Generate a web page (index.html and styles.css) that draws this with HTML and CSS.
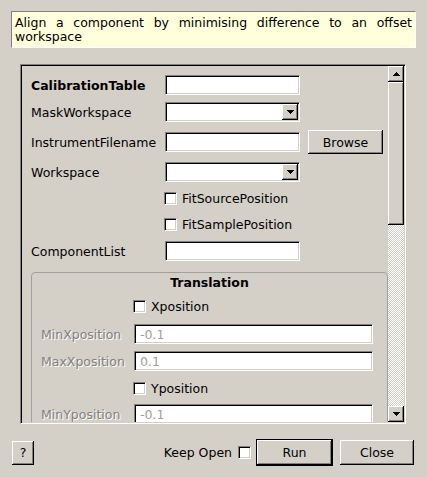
FILE: index.html
```html
<!DOCTYPE html>
<html>
<head>
<meta charset="utf-8">
<link rel="stylesheet" href="styles.css">
</head>
<body>
<div class="dialog">
  <div class="desc">Align a component by minimising difference to an offset workspace</div>
  <div class="scrollframe">
    <div class="viewport">
      <div class="form">
        <div class="row r1"><span class="label bold">CalibrationTable</span><span class="field"></span></div>
        <div class="row r2"><span class="label">MaskWorkspace</span><span class="field combo"><span class="dropbtn"><svg width="7" height="4" viewBox="0 0 7 4"><path d="M0 0h7v1h-1v1h-1v1h-1v1h-1v-1h-1v-1h-1v-1h-1z"/></svg></span></span></div>
        <div class="row r3"><span class="label">InstrumentFilename</span><span class="field"></span><span class="btn browse">Browse</span></div>
        <div class="row r4"><span class="label">Workspace</span><span class="field combo"><span class="dropbtn"><svg width="7" height="4" viewBox="0 0 7 4"><path d="M0 0h7v1h-1v1h-1v1h-1v1h-1v-1h-1v-1h-1v-1h-1z"/></svg></span></span></div>
        <div class="row r5 chkrow"><span class="check"></span><span class="chklabel">FitSourcePosition</span></div>
        <div class="row r6 chkrow"><span class="check"></span><span class="chklabel">FitSamplePosition</span></div>
        <div class="row r7"><span class="label">ComponentList</span><span class="field"></span></div>
        <div class="group">
          <div class="gtitle">Translation</div>
          <div class="grow g1 gchk"><span class="check"></span><span class="chklabel">Xposition</span></div>
          <div class="grow g2"><span class="glabel">MinXposition</span><span class="gfield">-0.1</span></div>
          <div class="grow g3"><span class="glabel">MaxXposition</span><span class="gfield">0.1</span></div>
          <div class="grow g4 gchk"><span class="check"></span><span class="chklabel">Yposition</span></div>
          <div class="grow g5"><span class="glabel">MinYposition</span><span class="gfield">-0.1</span></div>
        </div>
      </div>
    </div>
    <div class="vscroll">
      <div class="sbtn"><svg width="7" height="4" viewBox="0 0 7 4"><path d="M0 4h7v-1h-1v-1h-1v-1h-1v-1h-1v1h-1v1h-1v1h-1z"/></svg></div>
      <div class="thumb"></div>
      <div class="track"></div>
      <div class="sbtn"><svg width="7" height="4" viewBox="0 0 7 4"><path d="M0 0h7v1h-1v1h-1v1h-1v1h-1v-1h-1v-1h-1v-1h-1z"/></svg></div>
    </div>
  </div>
  <div class="footer">
    <span class="btn help">?</span>
    <span class="keep">Keep Open</span>
    <span class="check keepchk"></span>
    <span class="default"><span class="btn run">Run</span></span>
    <span class="btn close">Close</span>
  </div>
</div>
</body>
</html>
```
FILE: styles.css
```css
* { box-sizing: border-box; }
html, body { margin: 0; padding: 0; }
body {
  width: 427px;
  height: 477px;
  overflow: hidden;
  background: #d4d0c8;
  font-family: "DejaVu Sans", sans-serif;
  font-size: 12.5px;
  color: #000;
}
.dialog { padding: 11px 11px 0 11px; }
.desc {
  height: 37px;
  background: #ffffdc;
  border: 1px solid;
  border-color: #808080 #ffffff #ffffff #808080;
  padding: 4px 3px 2px 3px;
  line-height: 14px;
  text-align: justify;
}
.scrollframe {
  margin: 16px 0 0 9px;
  width: 386px;
  height: 360px;
  display: flex;
  border: 1px solid;
  border-color: #808080 #ffffff #ffffff #808080;
  padding: 1px;
  box-shadow: inset 1px 1px #000, inset -1px -1px #d4d0c8;
}
.viewport {
  width: 366px;
  height: 356px;
  overflow: hidden;
}
.vscroll {
  width: 16px;
  height: 356px;
  display: flex;
  flex-direction: column;
}
.sbtn, .thumb, .btn, .dropbtn {
  background: #d4d0c8;
  box-shadow: inset -1px -1px #000, inset 1px 1px #fff, inset -2px -2px #808080;
}
.sbtn {
  height: 16px;
  flex: none;
  display: flex;
  align-items: center;
  justify-content: center;
}
.thumb { height: 143px; flex: none; }
.track {
  flex: 1;
  background-image: conic-gradient(#fff 25%, #d4d0c8 0 50%, #fff 0 75%, #d4d0c8 0);
  background-size: 2px 2px;
}
svg { display: block; shape-rendering: crispEdges; }
.form { padding: 9px 0 0 9px; }
.row { display: flex; align-items: center; height: 20px; }
.r2 { margin-top: 7px; }
.r3 { margin-top: 8px; height: 24px; }
.r4 { margin-top: 8px; }
.r5 { margin-top: 6px; }
.r6 { margin-top: 6px; }
.r7 { margin-top: 7px; }
.label { width: 134px; white-space: nowrap; }
.bold { font-weight: bold; }
.field {
  width: 135px;
  height: 20px;
  background: #fff;
  border: 1px solid;
  border-color: #808080 #ffffff #ffffff #808080;
  box-shadow: inset 1px 1px #000, inset -1px -1px #d4d0c8;
}
.combo {
  display: flex;
  justify-content: flex-end;
  padding: 1px;
}
.dropbtn {
  width: 16px;
  height: 16px;
  display: flex;
  align-items: center;
  justify-content: center;
}
.btn {
  display: flex;
  align-items: center;
  justify-content: center;
}
.browse { width: 75px; height: 24px; margin-left: 8px; }
.chkrow { padding-left: 133px; }
.check {
  width: 13px;
  height: 13px;
  flex: none;
  background: #fff;
  border: 1px solid;
  border-color: #808080 #ffffff #ffffff #808080;
  box-shadow: inset 1px 1px #000, inset -1px -1px #d4d0c8;
}
.chklabel { margin-left: 5px; }
.group {
  margin-top: 11px;
  width: 357px;
  border: 1px solid #a0a0a0;
  border-radius: 4px;
  padding: 0 0 20px 9px;
}
.gtitle {
  height: 20px;
  line-height: 20px;
  text-align: center;
  font-weight: bold;
  padding-right: 9px;
}
.grow { display: flex; align-items: center; height: 20px; }
.g1 { margin-top: 3px; }
.g2 { margin-top: 8px; }
.g3 { margin-top: 7px; }
.g4 { margin-top: 7px; }
.g5 { margin-top: 6px; }
.gchk { padding-left: 92px; }
.glabel {
  width: 93px;
  color: #808080;
  text-shadow: 1px 1px 0 #fff;
  white-space: nowrap;
}
.gfield {
  width: 239px;
  height: 20px;
  background: #fff;
  color: #a0a0a0;
  padding: 2px 0 0 5px;
  line-height: 16px;
  border: 1px solid;
  border-color: #808080 #ffffff #ffffff #808080;
  box-shadow: inset 1px 1px #000, inset -1px -1px #d4d0c8;
}
.footer {
  margin: 15px 2px 0 1px;
  height: 27px;
  display: flex;
  align-items: center;
}
.help { width: 22px; height: 24px; margin-right: auto; }
.keepchk { margin-left: 6px; }
.default {
  margin-left: 5px;
  width: 77px;
  height: 27px;
  border: 1px solid #000;
}
.run { width: 75px; height: 25px; }
.close { width: 74px; height: 25px; margin-left: 7px; }
```
